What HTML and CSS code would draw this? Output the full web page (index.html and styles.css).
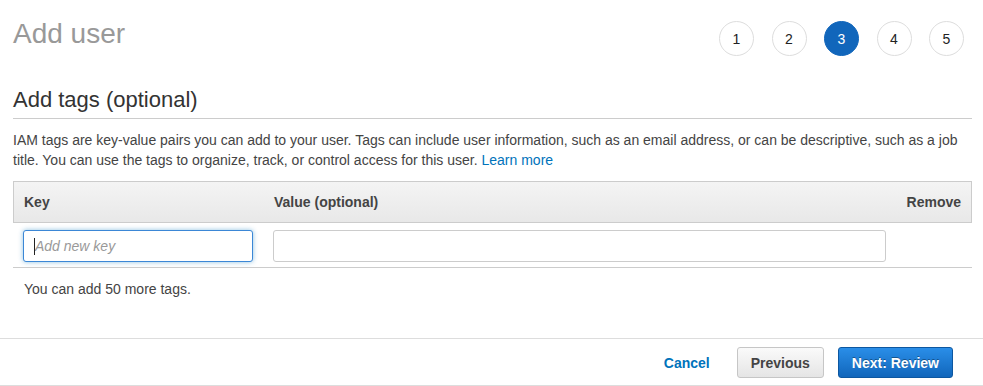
FILE: index.html
```html
<!DOCTYPE html>
<html lang="en">
<head>
<meta charset="utf-8">
<title>Add user</title>
<link rel="stylesheet" href="styles.css">
</head>
<body>
<div class="page">
  <div class="top">
    <h1 class="title">Add user</h1>
    <ol class="steps">
      <li class="step">1</li>
      <li class="step">2</li>
      <li class="step step-active">3</li>
      <li class="step">4</li>
      <li class="step">5</li>
    </ol>
  </div>
  <h2 class="section-title">Add tags (optional)</h2>
  <p class="desc">IAM tags are key-value pairs you can add to your user. Tags can include user information, such as an email address, or can be descriptive, such as a job title. You can use the tags to organize, track, or control access for this user. <a class="link" href="#">Learn more</a></p>
  <div class="tags">
    <div class="tags-head">
      <div class="th">Key</div>
      <div class="th">Value (optional)</div>
      <div class="th th-right">Remove</div>
    </div>
    <div class="tags-row">
      <div class="cell">
        <div class="field-wrap">
          <input class="field field-focus" type="text" placeholder="Add new key">
          <span class="caret"></span>
        </div>
      </div>
      <div class="cell">
        <input class="field" type="text">
      </div>
      <div class="cell"></div>
    </div>
  </div>
  <p class="note">You can add 50 more tags.</p>
</div>
<div class="footer">
  <a class="cancel" href="#">Cancel</a>
  <button class="btn btn-secondary" type="button">Previous</button>
  <button class="btn btn-primary" type="button">Next: Review</button>
</div>
</body>
</html>
```
FILE: styles.css
```css
* { box-sizing: border-box; }
html, body {
  margin: 0;
  padding: 0;
  background: #ffffff;
  font-family: "Liberation Sans", Arial, sans-serif;
  color: #444444;
}
.page {
  padding: 0 11px 0 13px;
}
.top {
  display: flex;
  justify-content: space-between;
  align-items: flex-start;
  height: 56px;
}
.title {
  margin: 0;
  padding-top: 17px;
  font-size: 28px;
  line-height: 34px;
  font-weight: normal;
  color: #999999;
}
.steps {
  list-style: none;
  margin: 21px 8px 0 0;
  padding: 0;
  display: flex;
  gap: 17.5px;
}
.step {
  width: 35px;
  height: 35px;
  border: 1px solid #dddddd;
  border-radius: 50%;
  display: flex;
  align-items: center;
  justify-content: center;
  font-size: 14px;
  color: #222222;
  background: #ffffff;
}
.step-active {
  background: #1166bb;
  border-color: #1166bb;
  color: #ffffff;
}
.section-title {
  margin: 31px 0 0 0;
  padding-bottom: 5px;
  font-size: 22px;
  line-height: 26px;
  font-weight: normal;
  color: #333333;
  border-bottom: 1px solid #cccccc;
}
.desc {
  margin: 11px 0 0 0;
  font-size: 14px;
  line-height: 20px;
  color: #444444;
}
.link {
  color: #0073bb;
  text-decoration: none;
}
.tags {
  margin-top: 11px;
}
.tags-head {
  display: grid;
  grid-template-columns: 250px 1fr 76px;
  height: 42px;
  align-items: center;
  border: 1px solid #cccccc;
  background: linear-gradient(#f4f4f4, #e8e8e8);
}
.th {
  padding: 0 10px;
  font-size: 14px;
  line-height: 17px;
  font-weight: bold;
  color: #444444;
}
.th-right {
  text-align: right;
}
.tags-row {
  display: grid;
  grid-template-columns: 250px 1fr 76px;
  padding: 7px 0 5px 0;
  border-bottom: 1px solid #cccccc;
}
.cell {
  padding: 0 10px;
}
.field-wrap {
  position: relative;
}
.field {
  display: block;
  width: 100%;
  height: 32px;
  padding: 0 11px;
  border: 1px solid #cccccc;
  border-radius: 3px;
  font-family: "Liberation Sans", Arial, sans-serif;
  font-size: 14px;
  color: #444444;
  background: #ffffff;
  outline: none;
}
.field::placeholder {
  color: #999999;
  font-style: italic;
}
.field-focus {
  border-color: #3b87d6;
  box-shadow: 0 0 5px rgba(0, 115, 187, 0.45);
}
.caret {
  position: absolute;
  left: 11px;
  top: 8px;
  width: 1px;
  height: 17px;
  background: #222222;
}
.note {
  margin: 11px 0 0 11px;
  font-size: 14px;
  line-height: 20px;
  color: #444444;
}
.footer {
  margin-top: 39px;
  border-top: 1px solid #dddddd;
  border-bottom: 1px solid #dddddd;
  padding: 8px 30px 7px 0;
  display: flex;
  justify-content: flex-end;
  align-items: center;
}
.cancel {
  font-size: 14px;
  font-weight: bold;
  color: #0073bb;
  text-decoration: none;
  margin-right: 27px;
}
.btn {
  height: 31px;
  padding: 0 13px;
  border-radius: 3px;
  font-family: "Liberation Sans", Arial, sans-serif;
  font-size: 14px;
  font-weight: bold;
  cursor: pointer;
}
.btn-secondary {
  border: 1px solid #c6c6c6;
  background: linear-gradient(#fafafa, #e5e5e5);
  color: #444444;
  margin-right: 14px;
}
.btn-primary {
  border: 1px solid #0d57a0;
  background: linear-gradient(#2a8ee8, #1166bb);
  color: #ffffff;
  text-shadow: 0 -1px 0 rgba(0, 0, 0, 0.35);
}
```
